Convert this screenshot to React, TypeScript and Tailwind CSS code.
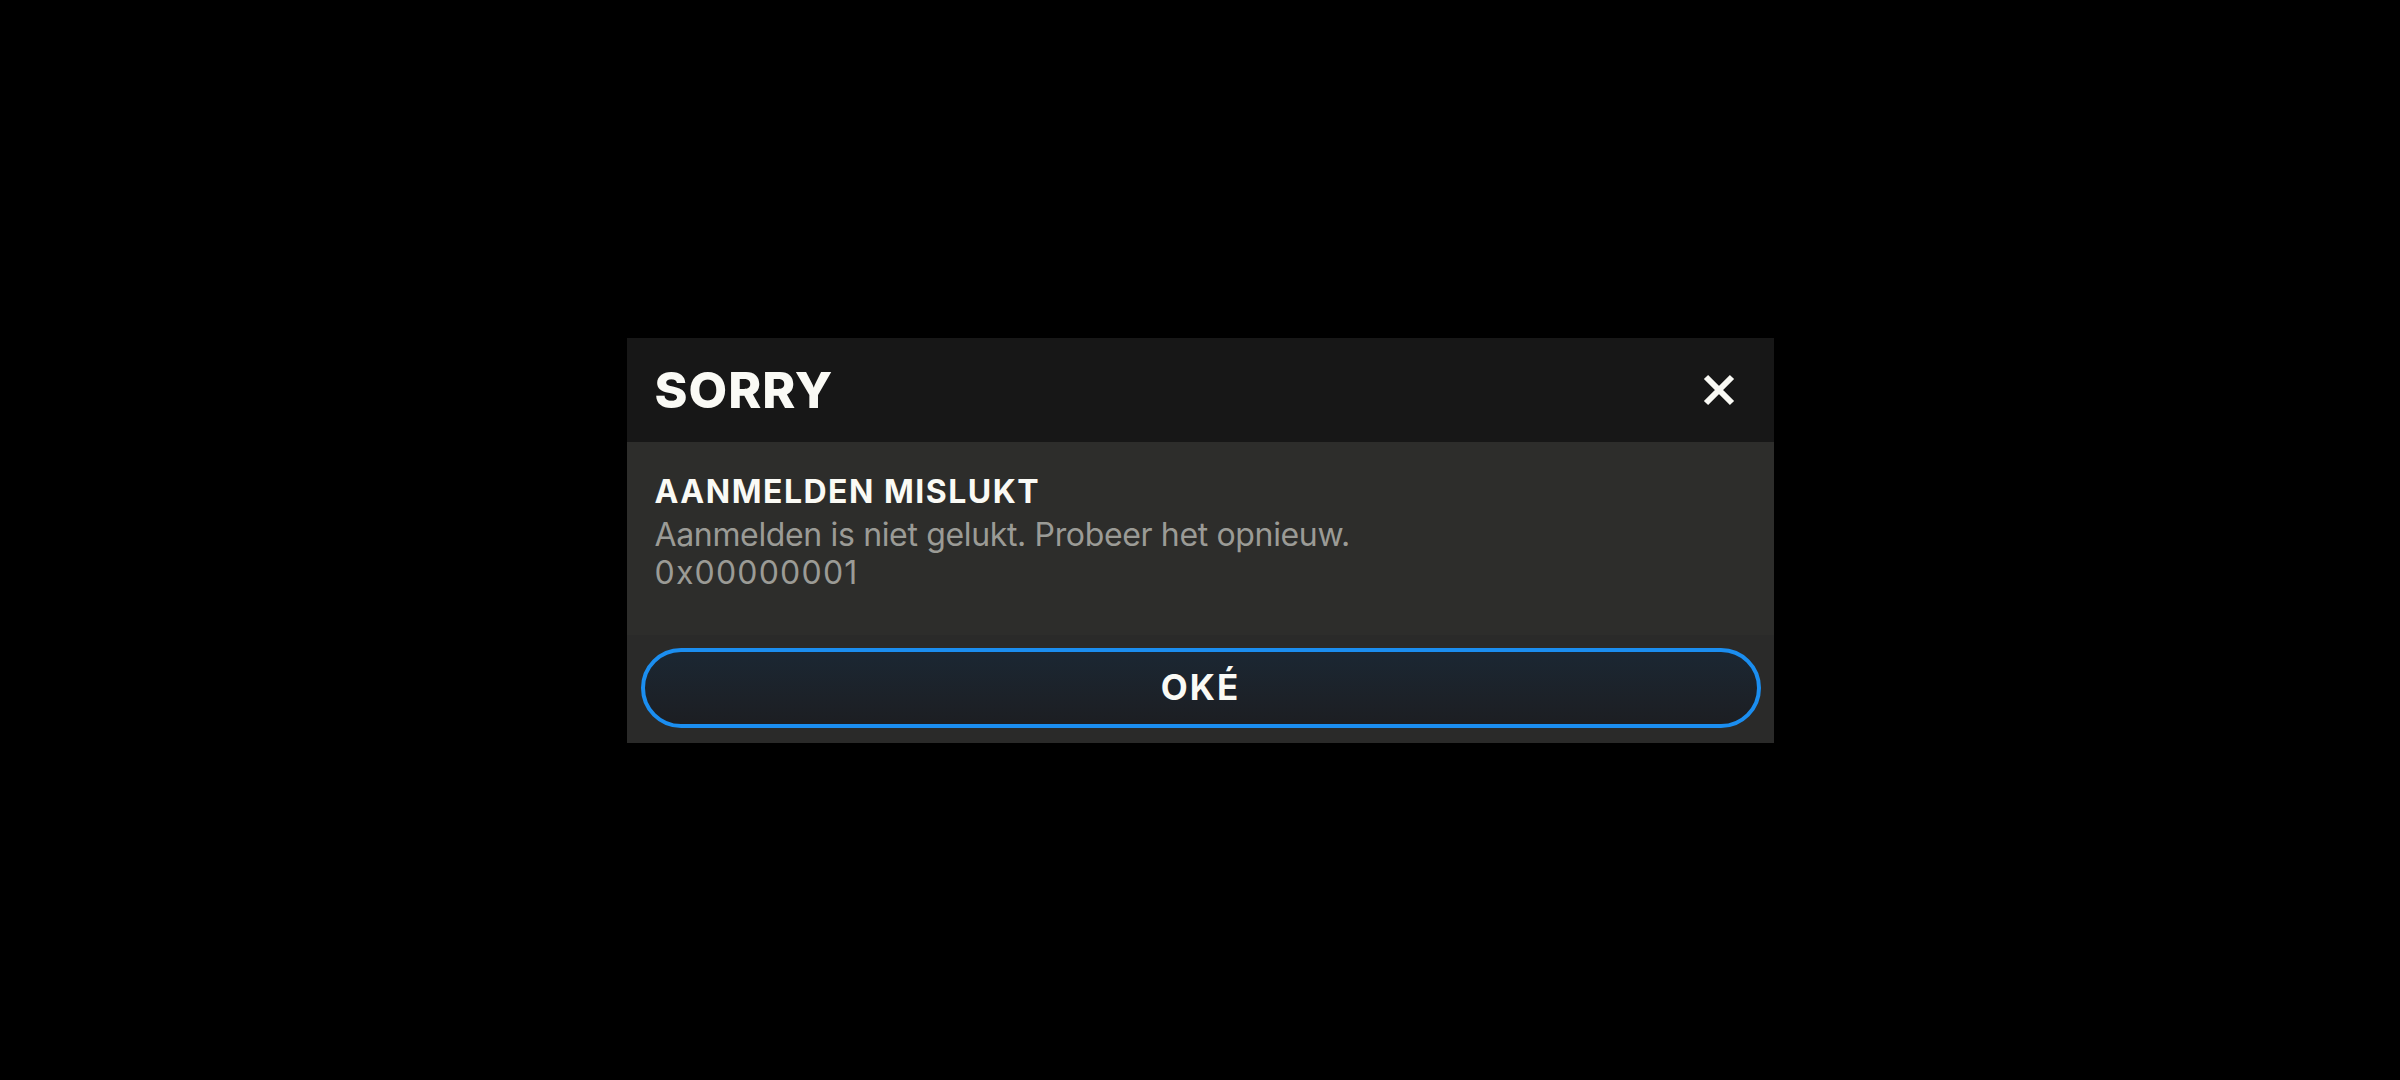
const FONT = { fontFamily: 'Inter, "Noto Sans", "Liberation Sans", sans-serif' };

function CloseIcon() {
  return (
    <svg width="34" height="34" viewBox="0 0 34 34" className="text-[#fafaf5]" aria-hidden="true">
      <path d="M4 4 L30 30 M30 4 L4 30" stroke="currentColor" strokeWidth="6" strokeLinecap="butt" />
    </svg>
  );
}

export default function App() {
  return (
    <div className="flex h-screen w-full items-center justify-center bg-black" style={FONT}>
      <div className="flex w-[1147px] flex-col">
        <div className="flex h-[104px] items-center justify-between bg-[#171717] pl-[28px] pr-[38px]">
          <h1 className="text-[50px] leading-none font-extrabold tracking-[1px] text-[#fafaf5]">SORRY</h1>
          <button type="button" aria-label="Sluiten" className="flex items-center justify-center">
            <CloseIcon />
          </button>
        </div>

        <div className="bg-[#2d2d2b] px-[28px] pt-[30px] pb-[43px]">
          <h2 className="text-[32px] leading-[40px] font-bold tracking-[1.5px] text-[#fafaf5]">AANMELDEN MISLUKT</h2>
          <p className="mt-[4px] text-[32px] leading-[38px] tracking-[-0.35px] text-[#9b9b96]">
            Aanmelden is niet gelukt. Probeer het opnieuw.
          </p>
          <p className="text-[32px] leading-[38px] tracking-[1.2px] text-[#9b9b96]">0x00000001</p>
        </div>

        <div className="flex bg-[#2a2a29] pl-[14px] pr-[13px] pt-[13px] pb-[15px]">
          <button
            type="button"
            className="flex h-[80px] flex-1 items-center justify-center rounded-full border-[4px] border-[#1b8ef0] bg-gradient-to-b from-[#1b2733] to-[#1c1e22] text-[35px] font-bold tracking-[2px] text-[#fafaf5]"
          >
            OKÉ
          </button>
        </div>
      </div>
    </div>
  );
}
